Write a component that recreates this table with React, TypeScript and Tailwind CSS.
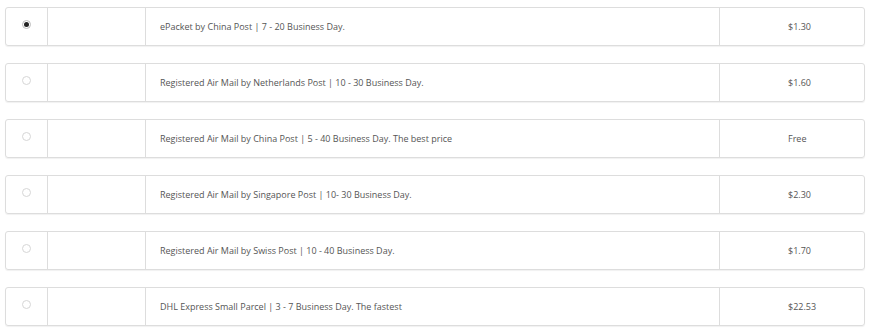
import React, { useState } from 'react';

interface ShippingOption {
  name: string;
  price: string;
}

const options: ShippingOption[] = [
  { name: 'ePacket by China Post | 7 - 20 Business Day.', price: '$1.30' },
  { name: 'Registered Air Mail by Netherlands Post | 10 - 30 Business Day.', price: '$1.60' },
  { name: 'Registered Air Mail by China Post | 5 - 40 Business Day. The best price', price: 'Free' },
  { name: 'Registered Air Mail by Singapore Post | 10- 30 Business Day.', price: '$2.30' },
  { name: 'Registered Air Mail by Swiss Post | 10 - 40 Business Day.', price: '$1.70' },
  { name: 'DHL Express Small Parcel | 3 - 7 Business Day. The fastest', price: '$22.53' },
];

export default function App() {
  const [selected, setSelected] = useState(0);

  return (
    <div className="w-[875px] h-[332px] bg-white pt-[7px] px-[5px] text-[#555] font-['Open_Sans',sans-serif]">
      <div className="flex flex-col gap-[17px] w-[860px]">
        {options.map((opt, i) => (
          <div
            key={i}
            onClick={() => setSelected(i)}
            className="flex h-[39px] border border-[#ddd] rounded-[3px] shadow-[0_1px_1px_rgba(0,0,0,0.06)] cursor-pointer"
          >
            <div className="w-[42px] border-r border-[#ddd] flex justify-center pt-[12px]">
              {selected === i ? (
                <span className="w-[9px] h-[9px] rounded-full border border-[#bbb] bg-white flex items-center justify-center">
                  <span className="w-[5px] h-[5px] rounded-full bg-[#222]" />
                </span>
              ) : (
                <span className="w-[9px] h-[9px] rounded-full border border-[#d6d6d6] bg-white" />
              )}
            </div>
            <div className="w-[98px] border-r border-[#ddd]" />
            <div className="flex-1 border-r border-[#ddd] flex items-center pl-[14px] text-[9px]">
              {opt.name}
            </div>
            <div className="w-[144px] flex items-center pl-[68px] text-[9px]">{opt.price}</div>
          </div>
        ))}
      </div>
    </div>
  );
}
